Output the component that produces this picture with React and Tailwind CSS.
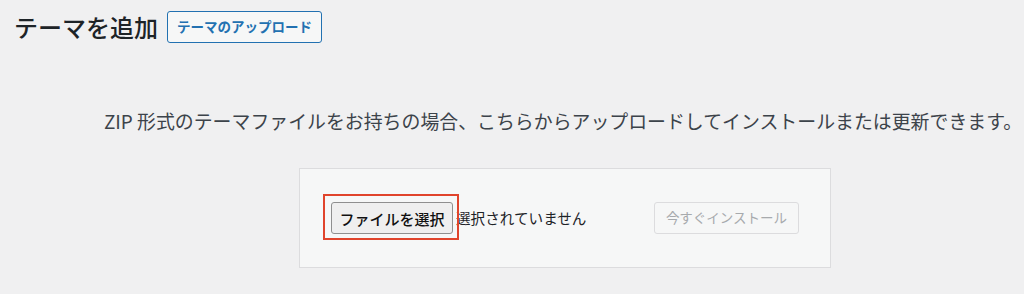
import React from 'react';

const jp = { fontFamily: '"Noto Sans CJK JP", "Noto Sans", sans-serif' };

export default function App() {
  return (
    <div className="w-[1024px] h-[294px] overflow-hidden bg-[#f0f0f1] text-[#1d2327]" style={jp}>
      <div className="w-[1126px]">
        {/* header */}
        <div className="flex items-center pl-[14px] pt-[11px]">
          <h1 className="text-[24px] leading-[32px] font-medium text-[#1d2327]">テーマを追加</h1>
          <button className="ml-[9px] h-[32px] px-[9px] rounded-[3px] border border-[#2271b1] bg-[#f6f7f7] text-[13.5px] font-semibold leading-none text-[#2271b1]">
            テーマのアップロード
          </button>
        </div>

        {/* help text */}
        <p className="mt-[66px] text-center text-[18.9px] leading-[24px] text-[#3c434a]">
          ZIP 形式のテーマファイルをお持ちの場合、こちらからアップロードしてインストールまたは更新できます。
        </p>

        {/* upload card */}
        <div className="mt-[35px] ml-[299px] w-[532px] h-[100px] bg-[#f6f7f7] border border-[#dcdcde] flex items-center pl-[31px]">
          <div className="w-[323px] flex items-center">
            <div className="relative">
              <button className="h-[32px] w-[122px] rounded-[3px] border border-[#8f8f8f] bg-[#efefef] text-[15px] font-medium leading-none text-[#111]">
                ファイルを選択
              </button>
              <span className="absolute -left-[8px] -top-[8px] w-[136px] h-[46px] border-[2.5px] border-[#e0442c] pointer-events-none" />
            </div>
            <span className="ml-[3px] text-[14.6px] text-[#1d2327]">選択されていません</span>
          </div>
          <button className="h-[32px] w-[145px] rounded-[3px] border border-[#dcdcde] bg-[#f6f7f7] text-[13.5px] leading-none text-[#a7aaad]">
            今すぐインストール
          </button>
        </div>
      </div>
    </div>
  );
}
